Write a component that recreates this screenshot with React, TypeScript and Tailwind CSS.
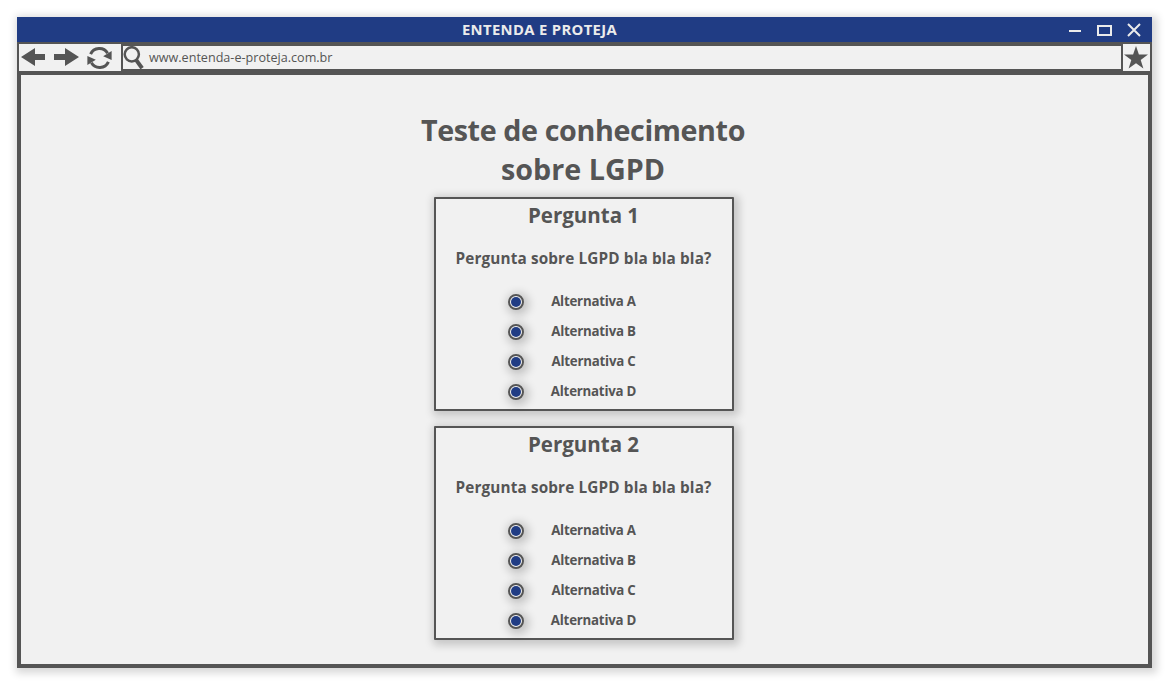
const INK = '#555555';

function BackIcon() {
  return (
    <svg width="25" height="18" viewBox="0 0 25 18" fill={INK}>
      <path d="M0 9 L14 0 V6 H24 V12 H14 V18 Z" />
    </svg>
  );
}

function ForwardIcon() {
  return (
    <svg width="25" height="18" viewBox="0 0 25 18" fill={INK}>
      <path d="M25 9 L11 0 V6 H0 V12 H11 V18 Z" />
    </svg>
  );
}

function ReloadIcon() {
  return (
    <svg width="25" height="22" viewBox="0 0 25 22" fill="none" stroke={INK} strokeWidth="3">
      <path d="M3.6 7.2 A9.6 9.6 0 0 1 20.6 6.2" />
      <path d="M21.4 14.8 A9.6 9.6 0 0 1 4.4 15.8" />
      <path d="M24.6 4 V13 L16.2 9.2 Z" fill={INK} stroke="none" />
      <path d="M0.4 18 V9 L8.8 12.8 Z" fill={INK} stroke="none" />
    </svg>
  );
}

function SearchIcon() {
  return (
    <svg width="21" height="23" viewBox="0 0 21 23" fill="none" stroke={INK}>
      <circle cx="8.8" cy="8.3" r="7.1" strokeWidth="2.5" />
      <path d="M12.9 13.6 L19.1 22.2" strokeWidth="4" />
    </svg>
  );
}

function StarIcon() {
  return (
    <svg width="24" height="23" viewBox="0 0 24 23" fill={INK}>
      <path d="M12 0 L14.9 8.6 H24 L16.7 13.9 L19.4 22.6 L12 17.3 L4.6 22.6 L7.3 13.9 L0 8.6 H9.1 Z" />
    </svg>
  );
}

function WindowControls() {
  return (
    <svg width="72" height="15" viewBox="0 0 72 15" fill="none" stroke="#ebebeb" strokeWidth="2">
      <path d="M0 9 H12" />
      <rect x="29" y="4" width="13" height="9" />
      <path d="M59 2 L71 14 M71 2 L59 14" />
    </svg>
  );
}

function Option({ letter }: { letter: string }) {
  return (
    <li className="flex h-[30px] items-center">
      <span className="mt-[2px] flex size-4 shrink-0 items-center justify-center rounded-full border-2 border-[#555555] bg-[#f1f1f1] shadow-[2px_2px_10px_3px_rgba(0,0,0,0.2)]">
        <span className="size-[10px] rounded-full bg-[#203c84]" />
      </span>
      <span className="ml-[19px] w-[101px] text-center text-[13.3px] leading-[30px] tracking-[-0.24px]">
        Alternativa {letter}
      </span>
    </li>
  );
}

function Question({ number }: { number: number }) {
  return (
    <section className="h-[214px] w-[300px] rounded-[1px] border-2 border-[#555555] bg-[#f1f1f1] shadow-[2px_2px_8px_3px_rgba(0,0,0,0.18)]">
      <h2 className="pr-px text-center text-[20.5px] leading-8">Pergunta {number}</h2>
      <p className="mt-[11px] whitespace-nowrap pr-px text-center text-[15.3px] leading-8 tracking-[0.14px]">
        Pergunta sobre LGPD bla bla bla?
      </p>
      <ul className="mt-[12px] pl-[72px]">
        {['A', 'B', 'C', 'D'].map((letter) => (
          <Option key={letter} letter={letter} />
        ))}
      </ul>
    </section>
  );
}

export default function App() {
  return (
    <div className="h-[687px] w-[1171px] overflow-hidden bg-white pl-[17px] pt-[17px] font-['Open_Sans','Noto_Sans',sans-serif] text-[#555555]">
      <div className="flex h-[651px] w-[1135px] flex-col bg-[#555555] shadow-[2px_2px_8px_3px_rgba(0,0,0,0.16)]">
        <header className="flex h-[25px] shrink-0 items-center bg-[#203c84]">
          <h1 className="flex-1 pr-[7px] text-center text-[14.8px] font-bold leading-[25px] tracking-[0.35px] text-[#ebebeb]">
            ENTENDA E PROTEJA
          </h1>
          <div className="mr-[11px] flex shrink-0">
            <WindowControls />
          </div>
        </header>
        <div className="mx-[2px] mt-[2px] flex h-[27px] shrink-0 bg-[#f1f1f1]">
          <div className="flex w-[102px] shrink-0 items-center pb-px pl-[2px]">
            <BackIcon />
            <span className="ml-2 flex"><ForwardIcon /></span>
            <span className="ml-2 mt-px flex"><ReloadIcon /></span>
          </div>
          <div className="flex flex-1 items-center border-2 border-[#555555]">
            <SearchIcon />
            <span className="ml-[5px] text-[12.6px] leading-[23px]">www.entenda-e-proteja.com.br</span>
          </div>
          <div className="flex w-[27px] shrink-0 items-center pb-px pl-px">
            <StarIcon />
          </div>
        </div>
        <main className="mx-1 mb-1 mt-1 flex flex-1 flex-col items-center bg-[#f1f1f1] pt-[35px] font-bold">
          <h1 className="w-full pr-[3px] text-center text-[28.7px] leading-[39px]">
            <span className="tracking-[-0.38px]">Teste de conhecimento</span>
            <br />
            sobre LGPD
          </h1>
          <div className="mt-[9px] flex flex-col gap-[15px] pr-px">
            <Question number={1} />
            <Question number={2} />
          </div>
        </main>
      </div>
    </div>
  );
}
